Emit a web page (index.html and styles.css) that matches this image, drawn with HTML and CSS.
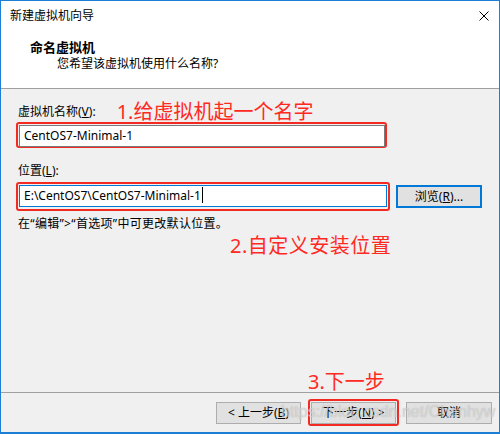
FILE: index.html
```html
<!DOCTYPE html>
<html lang="zh-CN">
<head>
  <meta charset="UTF-8">
  <title>新建虚拟机向导</title>
  <link rel="stylesheet" href="styles.css">
</head>
<body>
  <div class="window">
    <!-- title + wizard header -->
    <div class="top">
      <div class="titlebar">
        <span class="title">新建虚拟机向导</span>
        <svg class="close" width="10" height="10" viewBox="0 0 10 10">
          <path d="M0.5 0.5 L9.5 9.5 M9.5 0.5 L0.5 9.5" stroke="#000" stroke-width="1" fill="none"/>
        </svg>
      </div>
      <div class="header">
        <h2>命名虚拟机</h2>
        <p>您希望该虚拟机使用什么名称?</p>
      </div>
    </div>

    <div class="content">
      <div class="label-row">
        <span class="label">虚拟机名称(<u>V</u>):</span>
        <span class="note note-name">1.给虚拟机起一个名字</span>
      </div>
      <div class="mark mark-name">
        <div class="input">CentOS7-Minimal-1</div>
      </div>

      <div class="label label-loc">位置(<u>L</u>):</div>
      <div class="loc-row">
        <div class="mark mark-loc">
          <div class="input input-focus">E:\CentOS7\CentOS7-Minimal-1<span class="caret"></span></div>
        </div>
        <button class="btn btn-default">浏览(<u>R</u>)...</button>
      </div>
      <div class="hint">在“编辑”&gt;“首选项”中可更改默认位置。</div>
      <div class="note note-loc">2.自定义安装位置</div>
    </div>

    <div class="footer">
      <div class="note note-next">3.下一步</div>
      <div class="buttons">
        <button class="btn">&lt; 上一步(<u>B</u>)</button>
        <div class="mark mark-next">
          <button class="btn">下一步(<u>N</u>) &gt;</button>
        </div>
        <button class="btn">取消</button>
        <span class="watermark">https://blog.csdn.net/Chanhyw</span>
      </div>
    </div>
  </div>
</body>
</html>
```

FILE: styles.css
```css
body {
  margin: 0;
  font-family: "Noto Sans", "Noto Sans CJK SC", sans-serif;
  font-size: 12px;
  color: #000;
  background: #fff;
}

.window {
  width: 500px;
  height: 434px;
  box-sizing: border-box;
  border: 1px solid #1c7fd5;
  border-bottom-width: 2px;
  background: #f0f0f0;
  display: flex;
  flex-direction: column;
}

.top {
  background: #fff;
  height: 87px;
  border-bottom: 1px solid #a0a0a0;
}

.titlebar {
  height: 29px;
  display: flex;
  align-items: center;
  justify-content: space-between;
  padding: 0 10px 0 9px;
}

.title {
  line-height: 16px;
}

.header {
  padding-left: 29px;
}

.header h2 {
  margin: 9px 0 0;
  font-size: 13px;
  font-weight: bold;
  line-height: 16px;
}

.header p {
  margin: 0;
  padding-left: 27px;
  line-height: 17px;
}

.content {
  flex: 1;
  padding: 0 17px;
}

.label-row {
  display: flex;
  align-items: center;
  height: 20px;
  margin-top: 13px;
}

.label {
  line-height: 16px;
}

.note {
  color: #ff2a1f;
  font-size: 20px;
  line-height: 20px;
  white-space: nowrap;
}

.note-name {
  margin-left: 21px;
}

.mark {
  border: 2px solid #f32a22;
  border-radius: 3px;
  box-sizing: border-box;
}

.mark-name {
  width: 371px;
  height: 26px;
  margin: 0 0 0 -2px;
  padding: 1px 0 0 1px;
}

.input {
  background: #fff;
  border: 1px solid #7a7a7a;
  height: 20px;
  line-height: 20px;
  padding: 0 4px;
  box-sizing: content-box;
  white-space: nowrap;
}

.input-focus {
  border-color: #0078d7;
}

.caret {
  display: inline-block;
  width: 1px;
  height: 16px;
  background: #000;
  vertical-align: -3px;
  margin-left: 1px;
}

.label-loc {
  margin-top: 15px;
}

.loc-row {
  display: flex;
  align-items: center;
  margin-top: 3px;
}

.mark-loc {
  width: 374px;
  height: 29px;
  margin-left: -2px;
  padding: 1px 1px;
}

.btn {
  font-family: inherit;
  font-size: 12px;
  color: #000;
  background: #e1e1e1;
  border: 1px solid #adadad;
  width: 86px;
  height: 22px;
  padding: 0;
  line-height: 18px;
  box-sizing: border-box;
}

.btn-default {
  border: 2px solid #0078d7;
  margin-left: 6px;
  width: 86px;
  height: 23px;
}

.hint {
  margin-top: 5px;
  line-height: 16px;
  letter-spacing: 0.3px;
}

.note-loc {
  margin: 4px 0 0 212px;
  letter-spacing: 0.5px;
}

.footer {
  position: relative;
}

.note-next {
  margin-left: 307px;
  height: 20px;
}

.buttons {
  position: relative;
  border-top: 1px solid #a0a0a0;
  display: flex;
  justify-content: flex-end;
  align-items: center;
  gap: 7px;
  padding: 6px 7px 6px 0;
}

.buttons .btn {
  width: 85px;
}

.buttons > .btn:last-of-type {
  width: 86px;
}

.mark-next {
  padding: 0 1px;
  height: 27px;
  display: flex;
  align-items: center;
}

.watermark {
  position: absolute;
  left: 280px;
  top: 10px;
  font-family: "Liberation Sans", sans-serif;
  font-size: 16px;
  color: rgba(235, 235, 235, 0.6);
  text-shadow: 0 0 1px rgba(120, 120, 120, 0.5);
  white-space: nowrap;
  pointer-events: none;
}
```
